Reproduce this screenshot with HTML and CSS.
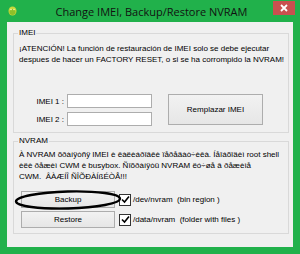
FILE: index.html
```html
<!DOCTYPE html>
<html>
  <head>
    <meta charset="utf-8">
    <link rel="stylesheet" href="styles.css">
  </head>
  <body>
    <div class="window">
      <div class="titlebar">
        <span class="app-icon">
          <svg width="9" height="10" viewBox="0 0 9 10">
            <ellipse cx="4.5" cy="5" rx="4" ry="4.5" fill="#c9d83a"/>
            <ellipse cx="4.5" cy="6" rx="3" ry="3" fill="#8fbf2a"/>
            <circle cx="3" cy="3.5" r="0.8" fill="#f4f7b0"/>
            <circle cx="6" cy="3.5" r="0.8" fill="#f4f7b0"/>
          </svg>
        </span>
        <span class="title">Change IMEI, Backup/Restore NVRAM</span>
        <span class="close">
          <svg width="8" height="8" viewBox="0 0 8 8">
            <path d="M1 1 L7 7 M7 1 L1 7" stroke="#fff" stroke-width="1.8"/>
          </svg>
        </span>
      </div>
      <div class="client">
        <fieldset class="group imei">
          <legend>IMEI</legend>
          <p class="note">¡ATENCIÓN! La función de restauración de IMEI solo se debe ejecutar<br>despues de hacer un FACTORY RESET, o si se ha corrompido la NVRAM!</p>
          <div class="imei-form">
            <label class="imei-label">IMEI 1 :</label>
            <input class="textbox" type="text">
            <button class="btn replace">Remplazar IMEI</button>
            <label class="imei-label">IMEI 2 :</label>
            <input class="textbox" type="text">
          </div>
        </fieldset>
        <fieldset class="group nvram">
          <legend>NVRAM</legend>
          <p class="note">À NVRAM õðàíÿòñÿ IMEI è êàëèáðîâêè ïåðåäàò÷èêà. Íåîáõîäèì root shell<br>èëè ðåæèì CWM è busybox. Ñîõðàíÿòü NVRAM ëó÷øå â ðåæèìå<br>CWM.&nbsp; ÂÀÆÍÎ ÑÎÕÐÀÍßÉÒÅ!!!</p>
          <div class="nv-row">
            <div class="marked">
              <button class="btn nv-btn">Backup</button>
              <svg class="mark" width="110" height="22" viewBox="0 0 110 22">
                <ellipse cx="55" cy="11" rx="52" ry="8.5" fill="none" stroke="#000" stroke-width="2.4" transform="rotate(-1.5 55 11)"/>
              </svg>
            </div>
            <label class="check"><span class="box"><svg width="9" height="9" viewBox="0 0 9 9"><path d="M1 4.5 L3.5 7 L8 1.5" fill="none" stroke="#000" stroke-width="1.6"/></svg></span>/dev/nvram&nbsp; (bin region )</label>
          </div>
          <div class="nv-row">
            <button class="btn nv-btn">Restore</button>
            <label class="check"><span class="box"><svg width="9" height="9" viewBox="0 0 9 9"><path d="M1 4.5 L3.5 7 L8 1.5" fill="none" stroke="#000" stroke-width="1.6"/></svg></span>/data/nvram&nbsp; (folder with files )</label>
          </div>
        </fieldset>
      </div>
    </div>
  </body>
</html>
```

FILE: styles.css
```css
/* ventana estilo Windows 8 */
body {
  margin: 0;
  font-family: "Liberation Sans", Arial, sans-serif;
  font-size: 8px;
  color: #000;
}
.window {
  width: 300px;
  height: 254px;
  box-sizing: border-box;
  background-color: #21b14b;
  padding: 0 7px 7px;
  display: flex;
  flex-direction: column;
}
.titlebar {
  height: 22px;
  margin: 0 -7px;
  padding: 0 5px 0 8px;
  display: grid;
  grid-template-columns: 1fr auto 1fr;
  align-items: center;
}
.app-icon {
  display: flex;
  align-items: center;
  margin-top: -1px;
}
.title {
  font-family: "Open Sans", "Liberation Sans", sans-serif;
  font-size: 11px;
  color: #111;
  margin-top: 1px;
}
.close {
  justify-self: end;
  align-self: start;
  margin-top: 1px;
  width: 22px;
  height: 14px;
  background-color: #c9504f;
  display: flex;
  justify-content: center;
  align-items: center;
}
.client {
  flex: 1;
  background-color: #f0f0f0;
  padding: 6px 4px 0 6px;
}
.group {
  margin: 0;
  padding: 0 4px 0 4px;
  border: 1px solid #d9d9d9;
  min-width: 0;
}
.group legend {
  padding: 0 1px;
  line-height: 10px;
}
.note {
  margin: 0 0 0 1px;
  line-height: 11px;
  white-space: nowrap;
}
.imei {
  padding-bottom: 6px;
}
.imei .note {
  margin-top: 5px;
}
.imei-form {
  display: grid;
  grid-template-columns: 49px 85px 95px;
  grid-template-rows: 14px 14px;
  row-gap: 4px;
  align-items: center;
  margin-top: 29px;
}
.imei-label {
  text-align: right;
  padding-right: 3px;
}
.textbox {
  box-sizing: border-box;
  width: 85px;
  height: 14px;
  margin: 0;
  padding: 0;
  border: 1px solid #adadad;
  background-color: #fff;
}
.btn {
  box-sizing: border-box;
  margin: 0;
  padding: 0;
  font-family: "Liberation Sans", Arial, sans-serif;
  font-size: 8px;
  color: #000;
  border: 1px solid #adadad;
  background-image: linear-gradient(#f2f2f2, #e6e6e6);
}
.replace {
  grid-column: 3;
  grid-row: 1 / span 2;
  margin-left: 16px;
  width: 95px;
  height: 31px;
  align-self: start;
}
.nvram {
  margin-top: 3px;
  padding-bottom: 5px;
}
.nvram .note {
  margin-top: 3px;
}
.nv-row {
  display: flex;
  align-items: center;
  padding-left: 3px;
}
.nv-row + .nv-row {
  margin-top: 3px;
}
.nvram .nv-row:first-of-type {
  margin-top: 9px;
}
.nv-btn {
  width: 94px;
  height: 17px;
}
.marked {
  position: relative;
  display: flex;
}
.mark {
  position: absolute;
  left: -8px;
  top: -2px;
}
.check {
  display: flex;
  align-items: center;
  margin-left: 4px;
}
.box {
  box-sizing: border-box;
  width: 12px;
  height: 12px;
  border: 1px solid #333;
  background-color: #fff;
  display: flex;
  justify-content: center;
  align-items: center;
  margin-right: 2px;
}
```
